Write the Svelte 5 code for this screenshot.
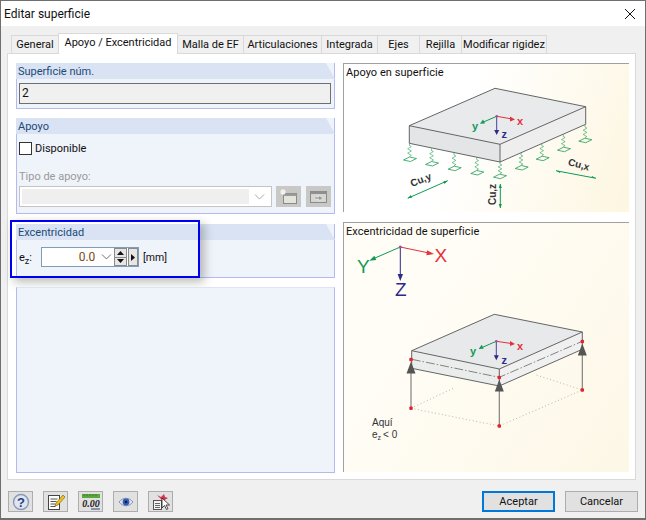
<script>
  const tabs = [
    { label: 'General', width: 48 },
    { label: 'Apoyo / Excentricidad', width: 120 },
    { label: 'Malla de EF', width: 67 },
    { label: 'Articulaciones', width: 79 },
    { label: 'Integrada', width: 57 },
    { label: 'Ejes', width: 43 },
    { label: 'Rejilla', width: 43 },
    { label: 'Modificar rigidez', width: 86 }
  ];
  const activeTab = 1;

  // spring anchor on the slab underside -> pad centre, in page coordinates
  const springs = [
    [409.5, 143.5, 410, 159.5],
    [431.5, 148.5, 432, 164],
    [454, 153, 454.7, 168.7],
    [476.7, 157.5, 477.3, 173],
    [500, 162, 500, 176.7],
    [521, 153, 521.7, 168],
    [541.7, 143.5, 542.7, 158.7],
    [563.3, 134.5, 564, 149.7],
    [585, 125, 585.3, 140.7]
  ];

  function coil(x1, y1, y2) {
    const steps = 5;
    const h = (y2 - y1 - 4) / steps;
    let d = `M${x1} ${y1}v2`;
    for (let i = 0; i < steps; i++) d += `l${i % 2 ? -1.8 : 1.8} ${h * 0.5}l${i % 2 ? 1.8 : -1.8} ${h * 0.5}`;
    return d;
  }

  const supports = [
    [411, 408.3, 359.5],
    [499.3, 426, 377.5],
    [582.3, 390, 341.5]
  ];
</script>

<div class="window">
  <header class="titlebar">
    <span>Editar superficie</span>
    <svg class="close" width="12" height="12" viewBox="0 0 12 12"><path d="M1 1l10 10M11 1L1 11" stroke="#111" fill="none" /></svg>
  </header>

  <nav class="tabs">
    {#each tabs as tab, i}
      <div class="tab" class:active={i === activeTab} style="width: {tab.width}px">{tab.label}</div>
    {/each}
  </nav>

  <main class="panel">
    <div class="left">
      <section class="group g-number">
        <h3>Superficie núm.</h3>
        <div class="group-body">
          <div class="readonly">2</div>
        </div>
      </section>

      <section class="group g-support">
        <h3>Apoyo</h3>
        <div class="group-body">
          <label class="check"><span class="box"></span>Disponible</label>
          <div class="muted">Tipo de apoyo:</div>
          <div class="combo-row">
            <div class="combo">
              <div class="combo-fill"></div>
              <svg width="11" height="6" viewBox="0 0 11 6"><path d="M1 .5l4.5 4.5L10 .5" stroke="#a8a8a8" fill="none" /></svg>
            </div>
            <div class="icon-btn disabled">
              <svg width="19" height="17" viewBox="0 0 19 17">
                <rect x="4.5" y="5.5" width="13" height="10" fill="#e4e4dc" stroke="#8a8a8a" />
                <rect x="4.5" y="5.5" width="13" height="2.5" fill="#9a9a9a" />
                <path d="M4 1v6M1 4h6M2 2l4 4M6 2L2 6" stroke="#f4f4f0" stroke-width="1.2" />
              </svg>
            </div>
            <div class="icon-btn disabled">
              <svg width="19" height="17" viewBox="0 0 19 17">
                <rect x="1.5" y="3.5" width="16" height="11" fill="#d6d6d0" stroke="#8a8a8a" />
                <rect x="1.5" y="3.5" width="16" height="2.5" fill="#8f8f8f" />
                <path d="M5 9h5l-1-2 5 3-4 3v-2H6z" fill="#9a9a9a" stroke="#f0f0f0" stroke-width=".6" />
              </svg>
            </div>
          </div>
        </div>
      </section>

      <section class="group g-ecc">
        <h3>Excentricidad</h3>
        <div class="group-body ecc-row">
          <span class="ez">e<sub>z</sub>:</span>
          <div class="num-input">
            <span class="num-value">0.0</span>
            <svg width="11" height="6" viewBox="0 0 11 6"><path d="M1 .5l4.5 4.5L10 .5" stroke="#6d6d6d" fill="none" /></svg>
            <div class="spin">
              <div class="spin-btn"><svg width="7" height="4" viewBox="0 0 7 4"><path d="M3.5 0L7 4H0z" fill="#111" /></svg></div>
              <div class="spin-btn"><svg width="7" height="4" viewBox="0 0 7 4"><path d="M0 0h7L3.5 4z" fill="#111" /></svg></div>
            </div>
            <div class="step"><svg width="4" height="7" viewBox="0 0 4 7"><path d="M0 0l4 3.5L0 7z" fill="#111" /></svg></div>
          </div>
          <span class="unit">[mm]</span>
        </div>
        <div class="highlight"></div>
      </section>

      <section class="group g-empty"></section>
    </div>

    <div class="right">
      <figure class="diagram d-support">
        <figcaption>Apoyo en superficie</figcaption>
        <svg width="286" height="148" viewBox="343 63 286 148">
          <path d="M409.3 125.7L495 88.3l90.7 18.4L500 144.3z" fill="#e9eaeb" />
          <path d="M409.3 125.7L500 144.3V162l-90.7-18.7z" fill="#e4e5e6" />
          <path d="M500 144.3l85.7-37.6v17.6L500 162z" fill="#eeeeee" />
          <path d="M409.3 125.7L495 88.3l90.7 18.4L500 144.3zM409.3 125.7v17.6L500 162l85.7-37.7v-17.6M500 144.3V162" fill="none" stroke="#555" stroke-width=".9" />
          {#each springs as [x1, y1, x2, y2]}
            <path d={coil(x1, y1, y2 - 1)} fill="none" stroke="#1f9d55" stroke-width=".6" />
            <path d="M{x2 - 6.5} {y2 + .5}l6-3 7 1.5-6 3z" fill="none" stroke="#1f9d55" stroke-width=".8" />
          {/each}

          <path d="M496.7 116.3L511 118.8" stroke="#e2323c" fill="none" />
          <path d="M515 119.5l-5-3v5z" fill="#e2323c" />
          <path d="M496.7 116.3L483.5 122" stroke="#109a55" fill="none" />
          <path d="M480 123.7l3 -4.2 2 4z" fill="#109a55" />
          <path d="M496.7 116.3V131" stroke="#46409a" fill="none" />
          <path d="M496.7 135l-2.5-5h5z" fill="#2c2a8a" />
          <circle cx="496.7" cy="116.3" r="1.3" fill="#a0509a" />
          <text x="517" y="125" class="axis" fill="#e2323c">x</text>
          <text x="472" y="130" class="axis" fill="#109a55">y</text>
          <text x="501.5" y="138" class="axis" fill="#2c2a8a">z</text>

          <path d="M447.7 180.7l-40 17.6M556 170.7l40 7.6M500.3 184v24" stroke="#109a55" fill="none" />
          <path d="M447.7 180.7l-4.4 .6 1.2 2.6zM407.7 198.3l4.4 -.6 -1.2 -2.6zM556 170.7l4 2.4.5-1.6zM596 178.3l-4-2.4-.5 1.6zM500.3 184l-1.6 4h3.2zM500.3 208l-1.6-4h3.2z" fill="#109a55" />
          <text class="cu" transform="translate(412 187) rotate(-22)">Cu,y</text>
          <text class="cu" transform="translate(567.5 165) rotate(15)">Cu,x</text>
          <text class="cu" transform="translate(495.5 205) rotate(-90)">Cu,z</text>
        </svg>
      </figure>

      <figure class="diagram d-ecc">
        <figcaption>Excentricidad de superficie</figcaption>
        <svg width="286" height="249" viewBox="343 222 286 249">
          <path d="M400.3 247L428 252.8" stroke="#e2323c" fill="none" />
          <path d="M434 254l-7-3.8-.6 5z" fill="#e2323c" />
          <path d="M400.3 247L375 258" stroke="#109a55" fill="none" />
          <path d="M369.3 260.7l7-.6-2-4.4z" fill="#109a55" />
          <path d="M400.3 247v28" stroke="#2c2a8a" fill="none" />
          <path d="M400.3 281l-2.7-7h5.4z" fill="#2c2a8a" />
          <circle cx="400.3" cy="247" r="1.5" fill="#a0509a" />
          <text x="434.5" y="262" class="axis-big" fill="#e2323c">X</text>
          <text x="357" y="273" class="axis-big" fill="#109a55">Y</text>
          <text x="395" y="295.5" class="axis-big" fill="#2c2a8a">Z</text>

          <path d="M411 408.3L454 388M411 408.3l88.3 17.7 83-36-46-15" fill="none" stroke="#a5a598" stroke-width=".8" stroke-dasharray="1 2.5" />

          <path d="M411.7 350.7L494.3 314.3l88 17.7L499.3 369z" fill="#e8e9ea" />
          <path d="M411.7 350.7L499.3 369v17l-87.6-17.7z" fill="#ebecec" />
          <path d="M499.3 369l83-37v17.3L499.3 386z" fill="#f0f0f0" />
          <path d="M411.7 350.7L494.3 314.3l88 17.7L499.3 369zM411.7 350.7v17.6L499.3 386l83-36.7V332M499.3 369v17" fill="none" stroke="#555" stroke-width=".9" />
          <path d="M411.7 359.3L499.3 377.3l83-36" fill="none" stroke="#555" stroke-width=".7" stroke-dasharray="9 2 1.5 2" />

          {#each supports as [x, yBase, yTip]}
            <path d="M{x} {yBase}V{yTip + 8}" stroke="#777" stroke-width="1.1" fill="none" />
            <path d="M{x} {yTip + 2}l-4.5 12h9z" fill="#555" />
            <rect x={x - 1.7} y={yBase - 1.7} width="3.4" height="3.4" rx="1" fill="#e3222b" />
            <rect x={x - 1.7} y={yTip - 1.7} width="3.4" height="3.4" rx="1" fill="#e3222b" />
          {/each}

          <path d="M496.3 341.3l15 2.2" stroke="#e2323c" fill="none" />
          <path d="M515 344l-5-3v5z" fill="#e2323c" />
          <path d="M496.3 341.3L482 347.5" stroke="#109a55" fill="none" />
          <path d="M478.7 349l3-4.2 2 4z" fill="#109a55" />
          <path d="M496.3 341.3V356" stroke="#46409a" fill="none" />
          <path d="M496.3 360.3l-2.5-5h5z" fill="#2c2a8a" />
          <circle cx="496.3" cy="341.3" r="1.3" fill="#a0509a" />
          <text x="517" y="350" class="axis" fill="#e2323c">x</text>
          <text x="470" y="355" class="axis" fill="#109a55">y</text>
          <text x="501.5" y="364" class="axis" fill="#2c2a8a">z</text>

          <text x="372" y="426" class="note">Aquí</text>
          <text x="372" y="438" class="note">e<tspan class="note-sub" dy="2">z</tspan><tspan dx="2" dy="-2">&lt; 0</tspan></text>
        </svg>
      </figure>
    </div>
  </main>

  <footer class="footer">
    <div class="tools">
      <button class="icon-btn" aria-label="Ayuda">
        <svg width="20" height="18" viewBox="0 0 20 18">
          <circle cx="10" cy="9" r="7.5" fill="#dfe6f3" stroke="#8c98b4" stroke-width="1.4" />
          <text x="10" y="14" text-anchor="middle" class="help">?</text>
        </svg>
      </button>
      <button class="icon-btn" aria-label="Editar">
        <svg width="20" height="18" viewBox="0 0 20 18">
          <rect x="2.5" y="2.5" width="11" height="14" fill="#fff" stroke="#444" />
          <path d="M4.5 6h7M4.5 8.5h6M4.5 11h5M4.5 13.5h5" stroke="#555" />
          <path d="M9 13l1-3 7-8 2 2-7 8z" fill="#f2c21c" stroke="#6e5a10" stroke-width=".6" />
        </svg>
      </button>
      <button class="icon-btn" aria-label="Unidades">
        <svg width="22" height="18" viewBox="0 0 22 18">
          <rect x="2" y="1" width="18" height="4" fill="#5aa83c" />
          <path d="M4 1v2M7 1v2M10 1v2M13 1v2M16 1v2" stroke="#2f6f20" stroke-width=".7" />
          <text x="11" y="14" text-anchor="middle" class="digits">0.00</text>
          <path d="M11 16h9" stroke="#35407a" />
        </svg>
      </button>
      <button class="icon-btn" aria-label="Vista">
        <svg width="20" height="18" viewBox="0 0 20 18">
          <path d="M3 9c4-5 10-5 14 0-4 5-10 5-14 0z" fill="#dde3ef" stroke="#8a93ad" />
          <circle cx="10" cy="9" r="3.4" fill="#2f5fb8" />
          <circle cx="10" cy="9" r="1.3" fill="#0d1a3a" />
        </svg>
      </button>
      <button class="icon-btn" aria-label="Seleccionar">
        <svg width="20" height="18" viewBox="0 0 20 18">
          <rect x="2.5" y="7.5" width="8" height="9" fill="#f4f4f4" stroke="#555" />
          <path d="M4 10.5h5M4 12.5h5M4 14.5h5" stroke="#666" />
          <path d="M6 2l4 2 3-3 1 3 3 1-5 3z" fill="#d9304a" />
          <path d="M11 5v10l2.5-2.5 2 4 1.5-.8-2-3.7h3.5z" fill="#fff" stroke="#222" stroke-width=".8" />
        </svg>
      </button>
    </div>
    <div class="actions">
      <button class="btn primary">Aceptar</button>
      <button class="btn">Cancelar</button>
    </div>
  </footer>
</div>

<style>
  :global(body) {
    margin: 0;
    background: #f0f0f0;
  }

  .window {
    width: 646px;
    height: 520px;
    box-sizing: border-box;
    display: flex;
    flex-direction: column;
    background: #f0f0f0;
    border: 1px solid #6f6f6f;
    border-bottom-width: 2px;
    font-family: Roboto, "Open Sans", sans-serif;
    font-size: 11px;
    color: #111;
  }

  .titlebar {
    height: 25px;
    flex: none;
    display: flex;
    align-items: center;
    justify-content: space-between;
    padding: 0 9px 0 3px;
    background: #fff;
    font-size: 12px;
  }

  .tabs {
    height: 27px;
    flex: none;
    display: flex;
    align-items: flex-end;
    padding-left: 10px;
  }

  .tab {
    height: 18px;
    box-sizing: border-box;
    line-height: 18px;
    text-align: center;
    background: #f0f0f0;
    border: 1px solid #d9d9d9;
    border-bottom: none;
    margin-right: -1px;
    white-space: nowrap;
  }

  .tab.active {
    height: 21px;
    line-height: 18px;
    background: #fff;
    position: relative;
    z-index: 1;
    margin-bottom: -1px;
  }

  .panel {
    height: 427px;
    flex: none;
    box-sizing: border-box;
    margin: 0 9px 0 6px;
    padding: 9px 6px 6px 8px;
    background: #fff;
    border: 1px solid #d9d9d9;
    display: flex;
    gap: 8px;
  }

  .left {
    width: 319px;
    flex: none;
    display: flex;
    flex-direction: column;
    gap: 9px;
  }

  .right {
    width: 286px;
    flex: none;
    display: flex;
    flex-direction: column;
    gap: 10px;
  }

  .group {
    position: relative;
    box-sizing: border-box;
    background: #eff3fa;
    border: 1px solid #b4baf0;
    border-top: none;
  }

  .group h3 {
    margin: 0 -1px;
    height: 16px;
    line-height: 18px;
    padding-left: 2px;
    font-size: 11px;
    font-weight: 400;
    color: #1c4a78;
    background: #d9e3f3;
    clip-path: polygon(0 0, calc(100% - 9px) 0, 100% 100%, 0 100%);
  }

  .g-number { height: 46px; }
  .g-support { height: 96px; }
  .g-ecc { height: 54px; margin-top: 1px; }
  .g-empty { height: 186px; border-top: 1px solid #dfe3f3; }

  .group-body {
    padding: 4px 3px 4px 2px;
  }

  .readonly {
    height: 21px;
    box-sizing: border-box;
    line-height: 18px;
    padding-left: 2px;
    font-size: 12px;
    background: #f0f0f0;
    border: 1px solid #6f6f6f;
  }

  .check {
    display: flex;
    align-items: center;
    gap: 3px;
    margin-top: 4px;
    height: 13px;
    line-height: 15px;
  }

  .box {
    width: 11px;
    height: 11px;
    background: #fff;
    border: 1px solid #333;
  }

  .muted {
    margin-top: 15px;
    height: 14px;
    line-height: 14px;
    color: #9a9a9a;
  }

  .combo-row {
    margin-top: 2px;
    display: flex;
    gap: 4px;
  }

  .combo {
    width: 253px;
    height: 21px;
    box-sizing: border-box;
    display: flex;
    align-items: center;
    gap: 5px;
    padding: 2px 6px 2px 2px;
    background: #fff;
    border: 1px solid #c4c4c4;
  }

  .combo-fill {
    flex: 1;
    align-self: stretch;
    background: #efefef;
  }

  .icon-btn {
    width: 25px;
    height: 21px;
    box-sizing: border-box;
    padding: 0;
    display: flex;
    align-items: center;
    justify-content: center;
    background: #e1e1e1;
    border: 1px solid #adadad;
  }

  .icon-btn.disabled {
    background: #c8c8c6;
    border-color: #c8c8c6;
  }

  .combo-row .icon-btn + .icon-btn {
    margin-left: 1px;
  }

  .ecc-row {
    display: flex;
    align-items: center;
    height: 20px;
    padding: 7px 0 0 2px;
  }

  .ez {
    width: 22px;
  }

  .ez sub {
    font-size: 9px;
    line-height: 0;
  }

  .num-input {
    width: 98px;
    height: 20px;
    box-sizing: border-box;
    display: flex;
    align-items: center;
    background: #fff;
    border: 1px solid #7f9db9;
  }

  .num-value {
    width: 54px;
    text-align: right;
    font-size: 12px;
    color: #7a4a10;
  }

  .num-input > svg {
    margin: 0 2px 0 6px;
  }

  .spin {
    width: 13px;
    height: 18px;
    display: flex;
    flex-direction: column;
    border: 1px solid #8a8a8a;
    box-sizing: border-box;
  }

  .spin-btn {
    flex: 1;
    display: flex;
    align-items: center;
    justify-content: center;
    background: #e6e6e6;
  }

  .spin-btn + .spin-btn {
    border-top: 1px solid #8a8a8a;
  }

  .step {
    width: 10px;
    height: 18px;
    box-sizing: border-box;
    margin-left: 1px;
    display: flex;
    align-items: center;
    justify-content: center;
    background: #e6e6e6;
    border: 1px solid #8a8a8a;
  }

  .unit {
    margin-left: 4px;
    font-size: 10.5px;
  }

  .highlight {
    position: absolute;
    left: -7px;
    top: -4px;
    width: 190px;
    height: 58px;
    box-sizing: border-box;
    border: 2.5px solid #0000f0;
    box-shadow: 4px 4px 9px rgba(60, 60, 50, 0.35);
    pointer-events: none;
  }

  .diagram {
    margin: 0;
    position: relative;
    border-top: 1px solid #a0a0a0;
    border-left: 1px solid #a0a0a0;
  }

  .diagram svg {
    display: block;
    margin: -1px 0 0 -1px;
  }

  .d-support {
    height: 148px;
    background: linear-gradient(110deg, #fff 40%, #fdf6e0 100%);
  }

  .d-ecc {
    height: 249px;
    background: linear-gradient(125deg, #fffdf6 30%, #fdf7e6 100%);
  }

  figcaption {
    position: absolute;
    left: 2px;
    top: 2px;
    font-size: 11px;
    letter-spacing: 0.05px;
    color: #111;
  }

  .axis {
    font-family: "Liberation Sans", sans-serif;
    font-size: 11px;
    font-weight: 700;
  }

  .axis-big {
    font-family: "Liberation Sans", sans-serif;
    font-size: 19px;
  }

  .cu {
    font-family: "Liberation Sans", sans-serif;
    font-size: 10px;
    font-weight: 700;
    fill: #333;
  }

  .note {
    font-family: "Liberation Sans", sans-serif;
    font-size: 10px;
    fill: #333;
  }

  .note-sub {
    font-size: 7px;
  }

  .help {
    font-family: "Liberation Sans", sans-serif;
    font-size: 13px;
    font-weight: 700;
    fill: #2b3f78;
  }

  .digits {
    font-family: "Liberation Serif", serif;
    font-size: 10px;
    font-style: italic;
    font-weight: 700;
    fill: #222;
  }

  .footer {
    flex: 1;
    display: flex;
    justify-content: space-between;
    padding: 11px 7px 0 7px;
  }

  .tools {
    display: flex;
    gap: 10px;
  }

  .actions {
    display: flex;
    gap: 10px;
  }

  .btn {
    width: 73px;
    height: 21px;
    box-sizing: border-box;
    padding: 0;
    font: inherit;
    color: #111;
    background: #e1e1e1;
    border: 1px solid #adadad;
  }

  .btn.primary {
    border: 2px solid #0078d7;
  }
</style>
